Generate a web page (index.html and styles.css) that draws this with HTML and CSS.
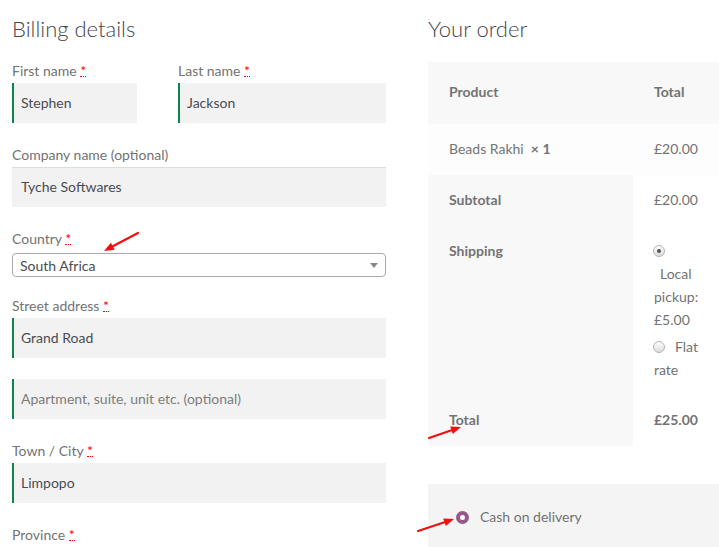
FILE: index.html
```html
<!DOCTYPE html>
<html lang="en">
<head>
<meta charset="utf-8">
<title>Checkout</title>
<link rel="stylesheet" href="styles.css">
</head>
<body>
<div class="page">
  <section class="billing">
    <h3 class="heading">Billing details</h3>
    <div class="row-split">
      <div class="field half-first">
        <label class="label">First name <abbr class="req">*</abbr></label>
        <div class="input valid">Stephen</div>
      </div>
      <div class="field half-last">
        <label class="label">Last name <abbr class="req">*</abbr></label>
        <div class="input valid">Jackson</div>
      </div>
    </div>
    <div class="field">
      <label class="label">Company name (optional)</label>
      <div class="input">Tyche Softwares</div>
    </div>
    <div class="field field-select">
      <label class="label">Country <abbr class="req">*</abbr></label>
      <div class="select"><span class="sel-text">South Africa</span><span class="caret"></span></div>
    </div>
    <div class="field field-tight">
      <label class="label">Street address <abbr class="req">*</abbr></label>
      <div class="input valid">Grand Road</div>
    </div>
    <div class="field">
      <div class="input valid placeholder">Apartment, suite, unit etc. (optional)</div>
    </div>
    <div class="field">
      <label class="label">Town / City <abbr class="req">*</abbr></label>
      <div class="input valid">Limpopo</div>
    </div>
    <div class="field">
      <label class="label">Province <abbr class="req">*</abbr></label>
    </div>
  </section>

  <section class="order">
    <h3 class="heading">Your order</h3>
    <table class="order-table">
      <thead>
        <tr><th class="c1">Product</th><th class="c2">Total</th></tr>
      </thead>
      <tbody>
        <tr class="item"><td class="c1">Beads Rakhi&nbsp; <strong>×&nbsp;1</strong></td><td class="c2">£20.00</td></tr>
      </tbody>
      <tfoot>
        <tr><th class="c1">Subtotal</th><td class="c2">£20.00</td></tr>
        <tr class="ship">
          <th class="c1">Shipping</th>
          <td class="c2">
            <div class="opt">
              <div class="line"><span class="radio checked"></span></div>
              <div class="line indent">Local</div>
              <div class="line">pickup:</div>
              <div class="line">£5.00</div>
            </div>
            <div class="opt opt2">
              <div class="line"><span class="radio"></span><span class="flat">Flat</span></div>
              <div class="line">rate</div>
            </div>
          </td>
        </tr>
        <tr><th class="c1">Total</th><td class="c2 strong">£25.00</td></tr>
      </tfoot>
    </table>
    <div class="payment">
      <span class="pay-radio"></span><span class="pay-label">Cash on delivery</span>
    </div>
  </section>
</div>

<svg class="arrows" width="719" height="547" viewBox="0 0 719 547">
  <g stroke="#f01010" stroke-width="2.2" stroke-linecap="round">
    <line x1="138" y1="233" x2="112.8" y2="246.3"/>
    <line x1="429" y1="438" x2="451.5" y2="430.3"/>
    <line x1="418" y1="531" x2="444.5" y2="522.2"/>
  </g>
  <g fill="#f01010">
    <polygon points="104,251 110.9,242.8 114.7,249.8"/>
    <polygon points="461,427 452.8,434.1 450.2,426.5"/>
    <polygon points="454,519 445.8,526 443.2,518.4"/>
  </g>
</svg>
</body>
</html>
```

FILE: styles.css
```css
html, body {
  margin: 0;
  padding: 0;
  overflow: hidden;
  background: #ffffff;
}

body {
  font-family: "Lato", "Liberation Sans", sans-serif;
  font-size: 14px;
  color: #737373;
  position: relative;
  width: 719px;
  height: 547px;
}

.page {
  display: flex;
  gap: 42px;
  padding: 14px 0 0 12px;
  height: 533px;
  overflow: hidden;
}

.billing {
  width: 374px;
  flex-shrink: 0;
}

.order {
  width: 291px;
  flex-shrink: 0;
}

.heading {
  margin: 0;
  font-size: 22px;
  line-height: 30px;
  font-weight: 300;
  color: #43454b;
}

.row-split {
  display: flex;
  margin-top: 17px;
}

.half-first {
  width: 125px;
}

.half-last {
  margin-left: 41px;
  flex: 1;
}

.row-split .field {
  margin-top: 0;
}

.field {
  margin-top: 22px;
}

.label {
  display: block;
  height: 20px;
  line-height: 20px;
  margin-bottom: 2px;
  color: #737373;
}

.req {
  color: #ff0000;
  text-decoration: none;
  border-bottom: 1px dotted #ff0000;
  line-height: 10px;
  display: inline-block;
}

.input {
  height: 40px;
  line-height: 40px;
  background: #f2f2f2;
  padding-left: 9px;
  color: #4a4c52;
  box-shadow: inset 0 1px 1px rgba(0, 0, 0, 0.1);
  box-sizing: border-box;
}

.input.valid {
  border-left: 2px solid #0f834d;
  padding-left: 7px;
  box-shadow: none;
}

.input.placeholder {
  color: #7d7d7d;
}

.field-select .label {
  margin-bottom: 4px;
}

.select {
  height: 24px;
  box-sizing: border-box;
  border: 1px solid #aaaaaa;
  border-radius: 4px;
  background: #ffffff;
  padding-left: 7px;
  color: #4a4c52;
  display: flex;
  justify-content: space-between;
  align-items: center;
}

.sel-text {
  line-height: 22px;
  padding-top: 2px;
}

.caret {
  width: 0;
  height: 0;
  border-left: 4px solid transparent;
  border-right: 4px solid transparent;
  border-top: 5px solid #888888;
  margin-right: 7px;
}

.field-tight {
  margin-top: 19px;
}

.field-tight + .field {
  margin-top: 21px;
}

/* Order table */
.order-table {
  margin-top: 18px;
  width: 291px;
  border-collapse: collapse;
  border-spacing: 0;
  table-layout: fixed;
}

.order-table th,
.order-table td {
  text-align: left;
  vertical-align: top;
  line-height: 23px;
  padding: 13px 21px 15px 21px;
}

.order-table .c1 {
  width: 163px;
}

.order-table .c2 {
  width: 44px;
}

.order-table th {
  font-weight: 700;
  color: #737373;
}

.order-table thead th {
  background: #f8f8f8;
  padding-top: 18px;
  padding-bottom: 21px;
}

.order-table tbody td {
  background: #fdfdfd;
}

.order-table tfoot th {
  background: #f8f8f8;
}

.order-table tfoot td {
  background: #ffffff;
}

.order-table .strong {
  font-weight: 700;
}

.ship th,
.ship td {
  padding-top: 13px;
  padding-bottom: 14px;
}

.opt2 {
  margin-top: 4px;
}

.line {
  height: 23px;
  white-space: nowrap;
  display: flex;
  align-items: center;
}

.indent {
  padding-left: 6px;
}

.radio {
  width: 10px;
  height: 10px;
  border-radius: 50%;
  border: 1px solid #b5b5b5;
  background: linear-gradient(#fdfdfd, #dcdcdc);
  margin-left: -1px;
  box-sizing: content-box;
  position: relative;
  flex-shrink: 0;
}

.radio.checked::after {
  content: "";
  position: absolute;
  left: 3px;
  top: 3px;
  width: 4px;
  height: 4px;
  border-radius: 50%;
  background: #555555;
}

.flat {
  margin-left: 10px;
}

.payment {
  margin-top: 38px;
  background: #f4f4f4;
  height: 100px;
  display: flex;
  align-items: flex-start;
  padding: 22px 0 0 27px;
  line-height: 22px;
}

.pay-radio {
  width: 5px;
  height: 5px;
  border-radius: 50%;
  border: 4px solid #96588a;
  background: #ffffff;
  margin-top: 5px;
  margin-left: 1px;
  flex-shrink: 0;
}

.pay-label {
  margin-left: 11px;
  color: #737373;
}

.arrows {
  position: absolute;
  left: 0;
  top: 0;
  pointer-events: none;
}
```
